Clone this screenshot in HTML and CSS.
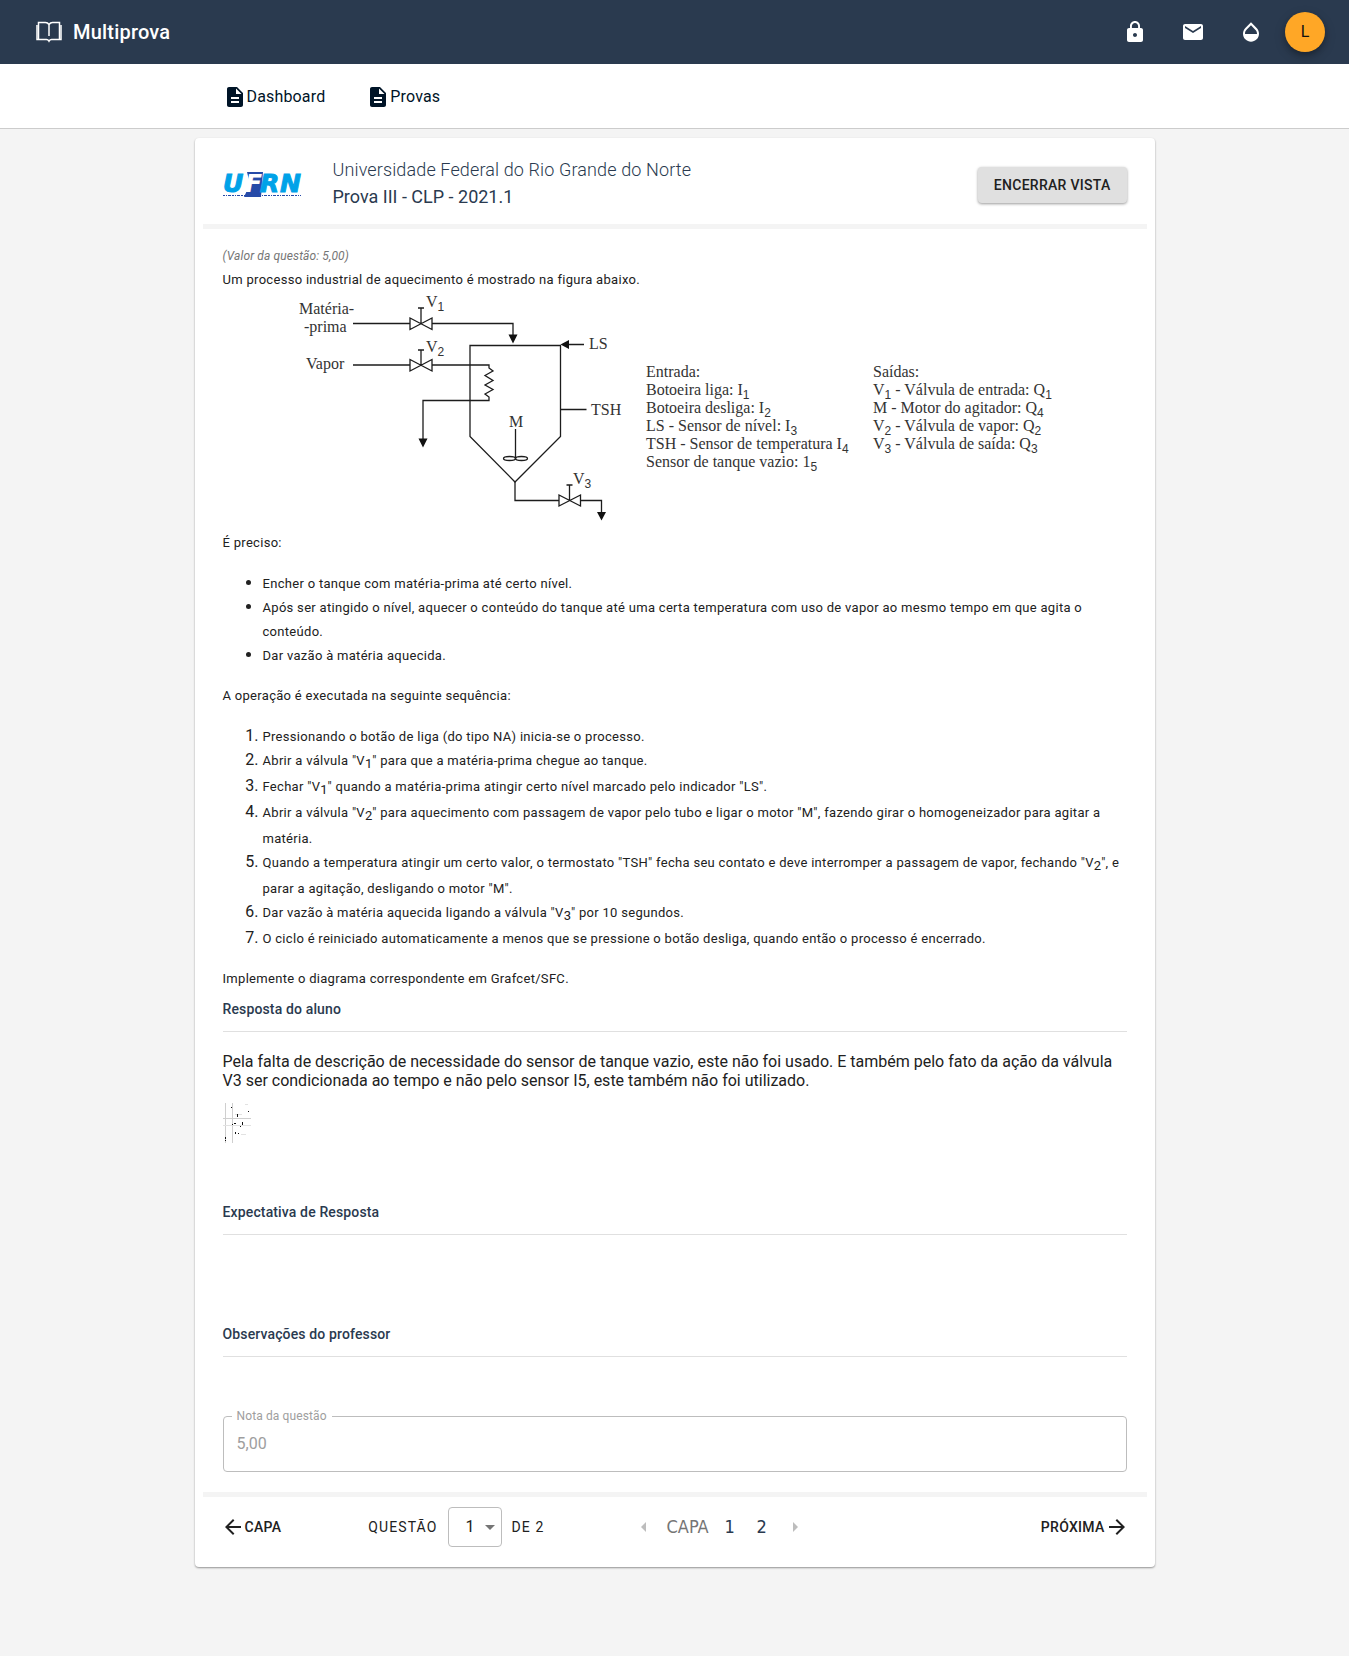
FILE: index.html
```html
<!DOCTYPE html>
<html lang="pt-BR">
<head>
<meta charset="utf-8">
<meta name="viewport" content="width=device-width, initial-scale=1">
<title>Multiprova</title>
<link rel="stylesheet" href="styles.css">
</head>
<body>
<header class="topbar">
  <a class="brand" href="#">
    <svg class="brand-icon" width="26" height="22" viewBox="0 0 26 22" fill="none" stroke="currentColor" stroke-width="1.5" aria-hidden="true">
      <path d="M13 3.500C12 2 11 1.500 9.500 1.500H2.500V18M13 3.500C14 2 15 1.500 16.500 1.500H23.500V18M13 3.500V15"/>
      <path d="M1 4V18.500H10.500Q12 18.500 13 20.200Q14 18.500 15.500 18.500H25V4"/>
    </svg>
    <span>Multiprova</span>
  </a>
  <div class="topbar-actions">
    <button class="icon-button" type="button" aria-label="Alterar senha"><svg class="icon" viewBox="0 0 24 24"><path d="M18 8h-1V6c0-2.760-2.240-5-5-5S7 3.240 7 6v2H6c-1.100 0-2 .9-2 2v10c0 1.100.9 2 2 2h12c1.100 0 2-.9 2-2V10c0-1.100-.9-2-2-2zm-6 9c-1.100 0-2-.9-2-2s.9-2 2-2 2 .9 2 2-.9 2-2 2zm3.100-9H8.900V6c0-1.710 1.390-3.100 3.100-3.100 1.710 0 3.100 1.390 3.100 3.100v2z"/></svg></button>
    <button class="icon-button" type="button" aria-label="Mensagens"><svg class="icon" viewBox="0 0 24 24"><path d="M20 4H4c-1.100 0-1.990.9-1.990 2L2 18c0 1.100.9 2 2 2h16c1.100 0 2-.9 2-2V6c0-1.100-.9-2-2-2zm0 4l-8 5-8-5V6l8 5 8-5v2z"/></svg></button>
    <button class="icon-button" type="button" aria-label="Contraste"><svg class="icon" viewBox="0 0 24 24"><path d="M17.660 8L12 2.350 6.340 8C4.780 9.560 4 11.640 4 13.640s.78 4.110 2.340 5.670 3.610 2.350 5.660 2.350 4.100-.79 5.660-2.350S20 15.640 20 13.640 19.220 9.560 17.660 8zM6 14c.01-2 .62-3.270 1.760-4.400L12 5.270l4.240 4.380C17.380 10.770 17.990 12 18 14H6z"/></svg></button>
    <button class="avatar" type="button">L</button>
  </div>
</header>

<nav class="menu">
  <div class="menu-inner">
    <a class="menu-link" href="#"><svg class="icon" viewBox="0 0 24 24"><path d="M14 2H6c-1.100 0-1.990.9-1.990 2L4 20c0 1.100.89 2 1.990 2H18c1.100 0 2-.9 2-2V8l-6-6zm2 16H8v-2h8v2zm0-4H8v-2h8v2zm-3-5V3.500L18.500 9H13z"/></svg>Dashboard</a>
    <a class="menu-link" href="#"><svg class="icon" viewBox="0 0 24 24"><path d="M14 2H6c-1.100 0-1.990.9-1.990 2L4 20c0 1.100.89 2 1.990 2H18c1.100 0 2-.9 2-2V8l-6-6zm2 16H8v-2h8v2zm0-4H8v-2h8v2zm-3-5V3.500L18.500 9H13z"/></svg>Provas</a>
  </div>
</nav>

<main class="card">
  <div class="exam-header">
    <svg class="logo" width="80" height="30" viewBox="0 0 80 30" role="img" aria-label="UFRN">
      <path fill="#264aa8" d="M24 2H40L38 27H21L27 14Z"/>
      <text x="0" y="22" class="logo-text">U</text>
      <text x="22" y="22" class="logo-text logo-f">F</text>
      <text x="37" y="22" class="logo-text">R</text>
      <text x="57" y="22" class="logo-text">N</text>
      <path stroke="#264aa8" stroke-dasharray="2 1 1 1 3 1" d="M0 25.500H78"/>
    </svg>
    <div class="exam-titles">
      <p class="institution">Universidade Federal do Rio Grande do Norte</p>
      <h1 class="exam-title">Prova III - CLP - 2021.1</h1>
    </div>
    <button class="button-raised" type="button">Encerrar vista</button>
  </div>

  <hr class="divider">

  <div class="question">
    <p class="points">(Valor da questão: 5,00)</p>
    <div class="statement">
      <p><span>Um processo industrial de aquecimento é mostrado na figura abaixo.</span></p>
      <svg class="figure" viewBox="0 0 904 239" role="img" aria-label="Diagrama do tanque de aquecimento">
        <g fill="none" stroke="#1c1c1c" stroke-width="1.300">
          <path d="M130 32.500H187M209 32.500H290V45"/>
          <path d="M187 27V38.500L209 27V38.500ZM198 32.500V17M195 17H201"/>
          <path d="M130 74H187M209 74H266V77L270 80 262 84.500 270 89.500 262 94 270 98.500 262 103 266 106V109.500H200V149"/>
          <path d="M187 68.500V80L209 68.500V80ZM198 74V59M195 59H201"/>
          <path d="M247 54.500H337.500V145.500L292 191L247 145.500Z"/>
          <path d="M361 53.500H344M337.500 118.500H363.500"/>
          <path d="M292.500 138V168"/>
          <ellipse cx="286.500" cy="167.500" rx="6" ry="2"/>
          <ellipse cx="298.500" cy="167.500" rx="6" ry="2"/>
          <path d="M292 191V209.500H336M357.500 209.500H378.500V222"/>
          <path d="M336 204V215L357.500 204V215ZM346.500 209.500V194M343.500 194H349.500"/>
        </g>
        <path fill="#111" d="M285.500 43.500H294.500L290 52.500ZM195.500 147.500H204.500L200 156.500ZM374 221H383L378.500 229.500ZM337.500 53.500L346 49V58Z"/>
        <g class="figure-text">
          <text x="76" y="23">Matéria-</text>
          <text x="81" y="41">-prima</text>
          <text x="83" y="78">Vapor</text>
          <text x="203" y="16">V<tspan class="sub" dy="4">1</tspan></text>
          <text x="203" y="61">V<tspan class="sub" dy="4">2</tspan></text>
          <text x="350" y="193">V<tspan class="sub" dy="4">3</tspan></text>
          <text x="286" y="136">M</text>
          <text x="366" y="58">LS</text>
          <text x="368" y="124">TSH</text>
          <text x="423" y="86">Entrada:</text>
          <text x="423" y="104">Botoeira liga: I<tspan class="sub" dy="4">1</tspan></text>
          <text x="423" y="122">Botoeira desliga: I<tspan class="sub" dy="4">2</tspan></text>
          <text x="423" y="140">LS - Sensor de nível: I<tspan class="sub" dy="4">3</tspan></text>
          <text x="423" y="158">TSH - Sensor de temperatura I<tspan class="sub" dy="4">4</tspan></text>
          <text x="423" y="176">Sensor de tanque vazio: 1<tspan class="sub" dy="4">5</tspan></text>
          <text x="650" y="86">Saídas:</text>
          <text x="650" y="104">V<tspan class="sub" dy="4">1</tspan><tspan dy="-4"> - Válvula de entrada: Q</tspan><tspan class="sub" dy="4">1</tspan></text>
          <text x="650" y="122">M - Motor do agitador: Q<tspan class="sub" dy="4">4</tspan></text>
          <text x="650" y="140">V<tspan class="sub" dy="4">2</tspan><tspan dy="-4"> - Válvula de vapor: Q</tspan><tspan class="sub" dy="4">2</tspan></text>
          <text x="650" y="158">V<tspan class="sub" dy="4">3</tspan><tspan dy="-4"> - Válvula de saída: Q</tspan><tspan class="sub" dy="4">3</tspan></text>
        </g>
      </svg>
      <p><span>É preciso:</span></p>
      <ul>
        <li><span>Encher o tanque com matéria-prima até certo nível.</span></li>
        <li><span>Após ser atingido o nível, aquecer o conteúdo do tanque até uma certa temperatura com uso de vapor ao mesmo tempo em que agita o conteúdo.</span></li>
        <li><span>Dar vazão à matéria aquecida.</span></li>
      </ul>
      <p><span>A operação é executada na seguinte sequência:</span></p>
      <ol>
        <li><span>Pressionando o botão de liga (do tipo NA) inicia-se o processo.</span></li>
        <li><span>Abrir a válvula "V</span><sub>1</sub><span>" para que a matéria-prima chegue ao tanque.</span></li>
        <li><span>Fechar "V</span><sub>1</sub><span>" quando a matéria-prima atingir certo nível marcado pelo indicador "LS".</span></li>
        <li><span>Abrir a válvula "V</span><sub>2</sub><span>" para aquecimento com passagem de vapor pelo tubo e ligar o motor "M", fazendo girar o homogeneizador para agitar a matéria.</span></li>
        <li><span>Quando a temperatura atingir um certo valor, o termostato "TSH" fecha seu contato e deve interromper a passagem de vapor, fechando "V</span><sub>2</sub><span>", e parar a agitação, desligando o motor "M".</span></li>
        <li><span>Dar vazão à matéria aquecida ligando a válvula "V</span><sub>3</sub><span>" por 10 segundos.</span></li>
        <li><span>O ciclo é reiniciado automaticamente a menos que se pressione o botão desliga, quando então o processo é encerrado.</span></li>
      </ol>
      <p><span>Implemente o diagrama correspondente em Grafcet/SFC.</span></p>
    </div>

    <section class="block">
      <h2 class="block-title">Resposta do aluno</h2>
      <div class="block-body block-answer">
        <p class="answer">Pela falta de descrição de necessidade do sensor de tanque vazio, este não foi usado. E também pelo fato da ação da válvula V3 ser condicionada ao tempo e não pelo sensor I5, este também não foi utilizado.</p>
        <svg class="thumb" width="28" height="40" viewBox="0 0 28 40" role="img" aria-label="Anexo da resposta">
          <path stroke="#cfcfcf" fill="none" d="M2.500 0V40M9.500 0V40M0 15.500H28"/>
          <path stroke="#e2e2e2" fill="none" d="M0 22.500H28M12 11.500H19M18 31.500H23M22 1.500H25"/>
          <path fill="#111" d="M8 4h1v1h-1zM25 8h1v1h-1zM14 11h1v3h-1zM9 21h1v1h-1zM11 20h2v1h-2zM19 19h1v3h-1zM17 23h1v1h-1zM12 29h1v2h-1zM15 30h1v1h-1zM2 34h1v2h-1zM2 37h1v1h-1z"/>
        </svg>
      </div>
    </section>
    <section class="block">
      <h2 class="block-title">Expectativa de Resposta</h2>
      <div class="block-body block-expected"></div>
    </section>
    <section class="block">
      <h2 class="block-title">Observações do professor</h2>
      <div class="block-body block-notes"></div>
    </section>

    <fieldset class="field">
      <legend class="field-legend"><label for="nota">Nota da questão</label></legend>
      <input id="nota" class="field-input" type="text" value="5,00" disabled>
    </fieldset>
  </div>

  <hr class="divider">

  <footer class="pager">
    <button class="button-text" type="button"><svg class="icon" viewBox="0 0 24 24"><path d="M20 11H7.830l5.590-5.590L12 4l-8 8 8 8 1.410-1.410L7.830 13H20v-2z"/></svg>Capa</button>
    <div class="jump">
      <label for="questao">QUESTÃO</label>
      <span class="select-wrap">
        <select id="questao" class="select"><option>1</option><option>2</option></select>
        <svg class="select-arrow" viewBox="0 0 24 24" aria-hidden="true"><path d="M7 10l5 5 5-5z"/></svg>
      </span>
      <span>DE 2</span>
    </div>
    <nav class="pages" aria-label="Paginação">
      <a class="page-arrow" href="#" aria-label="Anterior"><svg width="6" height="10" viewBox="0 0 6 10"><path d="M5 0V10L0 5Z"/></svg></a>
      <a class="page-cover" href="#">CAPA</a>
      <a class="page-number" href="#">1</a>
      <a class="page-number" href="#">2</a>
      <a class="page-arrow" href="#" aria-label="Seguinte"><svg width="6" height="10" viewBox="0 0 6 10"><path d="M0 0V10L5 5Z"/></svg></a>
    </nav>
    <button class="button-text button-next" type="button">Próxima<svg class="icon" viewBox="0 0 24 24"><path d="M12 4l-1.410 1.410L16.170 11H4v2h12.170l-5.580 5.590L12 20l8-8z"/></svg></button>
  </footer>
</main>
</body>
</html>
```

FILE: styles.css
```css
* { box-sizing: border-box; }

body {
  margin: 0;
  background: #f4f4f4;
  color: #212121;
  font: 16px/24px Roboto, "Liberation Sans", sans-serif;
}

p, h1, h2 { margin: 0; }
a { color: inherit; text-decoration: none; }
button { border: 0; padding: 0; background: none; color: inherit; font: inherit; cursor: pointer; }

.icon { display: block; width: 24px; height: 24px; fill: currentColor; }

/* Top bar */
.topbar {
  display: flex;
  align-items: center;
  justify-content: space-between;
  height: 64px;
  padding: 0 24px 0 36px;
  background: #2a3a4f;
  color: #fff;
}
.brand { display: flex; align-items: center; gap: 11px; font-size: 20px; font-weight: 500; letter-spacing: .01em; }
.topbar-actions { display: flex; align-items: center; gap: 10px; }
.icon-button { display: grid; place-items: center; width: 48px; height: 48px; }
.avatar {
  width: 40px;
  height: 40px;
  border-radius: 50%;
  background: #ffa726;
  color: #111;
  box-shadow: 0 3px 5px rgba(0, 0, 0, .2), 0 4px 12px rgba(0, 0, 0, .2);
}

/* Navigation */
.menu { background: #fff; border-bottom: 1px solid #ccc; color: #001427; letter-spacing: .01em; }
.menu-inner { display: flex; gap: 41px; max-width: 960px; height: 64px; margin: 0 auto; padding: 1px 28px 0; }
.menu-link { display: flex; align-items: center; }

/* Exam card */
.card {
  max-width: 960px;
  margin: 9px auto 90px;
  padding: 8px;
  background: #fff;
  border-radius: 4px;
  box-shadow: 0 1px 2px rgba(0, 0, 0, .4);
}
.divider { height: 5px; margin: 0; border: 0; background: #f4f4f4; }

.exam-header { display: flex; align-items: center; padding: 10px 20px; color: #2a3a4f; }
.logo { flex: none; margin-right: 30px; }
.logo-text { font: italic bold 25px "DejaVu Sans", sans-serif; fill: #00a2e8; stroke: #00a2e8; }
.logo-f { fill: #fff; stroke: none; }
.exam-titles { flex: 1; padding-bottom: 4px; font-size: 18px; line-height: 27px; }
.institution { font-weight: 300; letter-spacing: .007em; }
.exam-title { font-size: 18px; font-weight: 400; }
.button-raised {
  height: 36px;
  padding: 0 16px;
  border-radius: 4px;
  background: #e0e0e0;
  color: #212121;
  font-size: 14px;
  font-weight: 500;
  letter-spacing: .02em;
  text-transform: uppercase;
  box-shadow: 0 1px 3px rgba(0, 0, 0, .4);
}

.question { padding: 16px 20px 20px; }
.points { color: #757575; font-size: 12px; line-height: 22px; font-style: italic; letter-spacing: .01em; }

.statement span { font-size: 13px; line-height: 20px; letter-spacing: .023em; }
.statement ul, .statement ol { margin: 17px 0 16px; padding-left: 40px; }
.statement sub { font-size: 13px; line-height: 20px; vertical-align: -3px; }
.figure { display: block; width: 100%; height: auto; }
.figure-text { font: 16px "Liberation Serif", serif; fill: #333; }
.sub { font: 12px "Liberation Sans", sans-serif; }

.block-title {
  padding: 7px 0 10px;
  border-bottom: 1px solid #e0e0e0;
  color: #2a3a4f;
  font-size: 14px;
  font-weight: 500;
  letter-spacing: .01em;
}
.block-body { padding-top: 20px; }
.block-answer { height: 161px; }
.block-expected { height: 80px; }
.block-notes { height: 53px; }
.answer { line-height: 19px; }
.thumb { display: block; margin-top: 13px; }

/* Grade field */
.field {
  height: 62px;
  margin: 0;
  padding: 0 8px;
  border: 1px solid #bdbdbd;
  border-radius: 4px;
  color: #9e9e9e;
}
.field-legend { padding: 0 5px; font-size: 12px; line-height: 12px; letter-spacing: .01em; }
.field-input {
  width: 100%;
  height: 42px;
  padding: 0 5px;
  border: 0;
  background: none;
  color: #9e9e9e;
  font: inherit;
}

/* Question pager */
.pager { display: flex; align-items: center; height: 62px; padding: 0 18px 2px; }
.button-text {
  display: flex;
  align-items: center;
  font-size: 14px;
  font-weight: 500;
  text-transform: uppercase;
  letter-spacing: .02em;
}
.button-next { margin-left: auto; }
.jump { display: flex; align-items: center; gap: 10px; margin-left: 87px; font-size: 14px; letter-spacing: .08em; }
.select-wrap { display: grid; }
.select, .select-arrow { grid-area: 1 / 1; }
.select {
  width: 54px;
  height: 40px;
  padding: 0 17px;
  border: 1px solid #bdbdbd;
  border-radius: 4px;
  appearance: none;
  background: #fff;
  color: inherit;
  font: inherit;
  font-size: 16px;
}
.select-arrow { place-self: center end; width: 24px; height: 24px; fill: #757575; pointer-events: none; }
.pages {
  display: flex;
  align-items: center;
  margin-left: 96px;
  color: #2a3a4f;
  font: 18px/24px "DejaVu Sans Condensed", "DejaVu Sans", sans-serif;
}
.page-cover { margin: 0 5px 0 20px; color: #757575; }
.page-number { width: 32px; text-align: center; }
.page-number + .page-arrow { margin-left: 15px; }
.page-arrow { display: flex; fill: #bdbdbd; }
```
